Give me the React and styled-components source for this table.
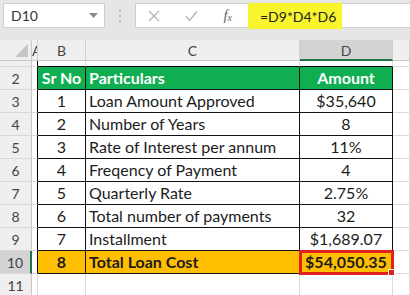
import React from 'react';
import styled, { createGlobalStyle } from 'styled-components';

const GlobalStyle = createGlobalStyle`
  html, body {
    margin: 0;
    padding: 0;
    background: #e6e6e6;
    overflow: hidden;
  }
  body {
    font-family: Lato, "Liberation Sans", sans-serif;
  }
`;

const rows = [
  { n: 2, kind: 'head', b: 'Sr No', c: 'Particulars', d: 'Amount' },
  { n: 3, b: '1', c: 'Loan Amount Approved', d: '$35,640' },
  { n: 4, b: '2', c: 'Number of Years', d: '8' },
  { n: 5, b: '3', c: 'Rate of Interest per annum', d: '11%' },
  { n: 6, b: '4', c: 'Freqency of Payment', d: '4' },
  { n: 7, b: '5', c: 'Quarterly Rate', d: '2.75%' },
  { n: 8, b: '6', c: 'Total number of payments', d: '32' },
  { n: 9, b: '7', c: 'Installment', d: '$1,689.07' },
  { n: 10, kind: 'total', b: '8', c: 'Total Loan Cost', d: '$54,050.35' },
];

const App = () => {
  return (
    <Page>
      <GlobalStyle />
      <FormulaBar>
        <NameBox>
          D10
          <svg width="9" height="6" viewBox="0 0 9 6">
            <path d="M0 0 L9 0 L4.5 5 Z" fill="#8a8a8a" />
          </svg>
        </NameBox>
        <Grip>
          <span />
          <span />
          <span />
        </Grip>
        <FormulaBox>
          <Actions>
            <svg width="12" height="12" viewBox="0 0 12 12">
              <path d="M1 1 L11 11 M11 1 L1 11" stroke="#b4b4b4" strokeWidth="1.4" />
            </svg>
            <svg width="13" height="12" viewBox="0 0 13 12">
              <path d="M1 6.5 L4.5 10.5 L12 1.5" stroke="#b4b4b4" strokeWidth="1.4" fill="none" />
            </svg>
            <Fx>
              f<sub>x</sub>
            </Fx>
          </Actions>
          <Formula>=D9*D4*D6</Formula>
        </FormulaBox>
      </FormulaBar>

      <Sheet>
        <Corner>
          <svg width="32" height="21" viewBox="0 0 32 21">
            <path d="M28 4 L28 17 L15 17 Z" fill="#c6c6c6" />
          </svg>
        </Corner>
        <ColHead $narrow>A</ColHead>
        <ColHead>B</ColHead>
        <ColHead>C</ColHead>
        <ColHead $active>D</ColHead>
        <ColHead />

        <RowHead $short />
        <Cell $short $edge="right" />
        <Cell $short $edge="bottom" />
        <Cell $short $edge="bottom" />
        <Cell $short $edge="bottom" />
        <Cell $short />

        {rows.map((r) => (
          <React.Fragment key={r.n}>
            <RowHead $active={r.n === 10}>{r.n}</RowHead>
            <Cell $edge="right" />
            <TableCell $kind={r.kind} $align="center">
              {r.b}
            </TableCell>
            <TableCell $kind={r.kind} $align="left">
              {r.c}
            </TableCell>
            <TableCell $kind={r.kind} $align="center" $selected={r.n === 10}>
              {r.d}
            </TableCell>
            <Cell />
          </React.Fragment>
        ))}

        <RowHead>11</RowHead>
        <Cell />
        <Cell />
        <Cell />
        <Cell />
        <Cell />
      </Sheet>
    </Page>
  );
};

const Page = styled.div`
  width: 410px;
  height: 295px;
  overflow: hidden;
  background: #e6e6e6;
`;

const FormulaBar = styled.div`
  display: flex;
  align-items: flex-start;
  height: 40px;
  padding: 3px 0 0 3px;
  box-sizing: border-box;
`;

const NameBox = styled.div`
  width: 102px;
  height: 25px;
  box-sizing: border-box;
  background: #fff;
  border: 1px solid #cfcfcf;
  display: flex;
  align-items: center;
  justify-content: space-between;
  padding: 0 6px 0 7px;
  font-size: 14px;
  color: #333;
`;

const Grip = styled.div`
  width: 30px;
  height: 25px;
  display: flex;
  flex-direction: column;
  align-items: center;
  justify-content: center;
  gap: 3px;

  span {
    width: 2px;
    height: 2px;
    background: #b8b8b8;
  }
`;

const FormulaBox = styled.div`
  flex: 1;
  height: 25px;
  box-sizing: border-box;
  background: #fff;
  border: 1px solid #cfcfcf;
  border-right: none;
  display: flex;
`;

const Actions = styled.div`
  width: 112px;
  display: flex;
  align-items: center;
  justify-content: space-between;
  padding: 0 16px 0 12px;
  box-sizing: border-box;
`;

const Fx = styled.span`
  font-family: "Liberation Serif", serif;
  font-style: italic;
  font-size: 15px;
  color: #666;

  sub {
    font-size: 10px;
    vertical-align: -1px;
  }
`;

const Formula = styled.div`
  width: 94px;
  height: 26px;
  margin-top: -1px;
  background: #f9f52c;
  display: flex;
  align-items: center;
  padding-left: 12px;
  box-sizing: border-box;
  font-size: 14px;
  color: #222;
`;

const Sheet = styled.div`
  display: grid;
  grid-template-columns: 32px 6px 48px 214px 93px 1fr;
  grid-template-rows: 21px 6px repeat(10, 23px);
  background: #fff;
`;

const Corner = styled.div`
  background: #efefef;
  border-right: 1px solid #c8c8c8;
  border-bottom: 1px solid #c8c8c8;
  box-sizing: border-box;
  svg {
    display: block;
  }
`;

const ColHead = styled.div`
  background: ${(p) => (p.$active ? '#d3d3d3' : '#efefef')};
  border-right: 1px solid #d0d0d0;
  border-bottom: ${(p) => (p.$active ? '2px solid #217346' : '1px solid #c8c8c8')};
  box-sizing: border-box;
  display: flex;
  align-items: center;
  justify-content: ${(p) => (p.$narrow ? 'flex-start' : 'center')};
  overflow: hidden;
  font-size: 14px;
  color: #444;
  padding-top: 1px;
`;

const RowHead = styled.div`
  background: ${(p) => (p.$active ? '#d3d3d3' : '#efefef')};
  border-right: ${(p) => (p.$active ? '2px solid #217346' : '1px solid #c8c8c8')};
  border-bottom: 1px solid #d8d8d8;
  box-sizing: border-box;
  display: flex;
  align-items: center;
  justify-content: center;
  font-size: 14px;
  color: #444;
`;

const Cell = styled.div`
  box-sizing: border-box;
  border-right: 1px solid ${(p) => (p.$edge === 'right' ? '#000' : '#dcdcdc')};
  border-bottom: 1px solid ${(p) => (p.$edge === 'bottom' ? '#000' : '#dcdcdc')};
`;

const kindBg = { head: '#0fae50', total: '#ffbf00' };

const TableCell = styled.div`
  position: relative;
  box-sizing: border-box;
  border-right: 1px solid #111;
  border-bottom: 1px solid #111;
  background: ${(p) => kindBg[p.$kind] || '#fff'};
  color: ${(p) => (p.$kind === 'head' ? '#fff' : '#1c1c1c')};
  font-weight: ${(p) => (p.$kind ? 700 : 400)};
  font-size: 16px;
  line-height: 18px;
  display: flex;
  align-items: flex-end;
  justify-content: ${(p) => (p.$align === 'left' ? 'flex-start' : 'center')};
  padding: 0 3px 2px;
  white-space: nowrap;

  ${(p) =>
    p.$selected &&
    `
    outline: 3px solid #e0201c;
    outline-offset: -2px;
    &::after {
      content: "";
      position: absolute;
      right: -3px;
      bottom: -3px;
      width: 5px;
      height: 5px;
      background: #e0201c;
      border: 1px solid #fff;
    }
  `}
`;

export default App;
